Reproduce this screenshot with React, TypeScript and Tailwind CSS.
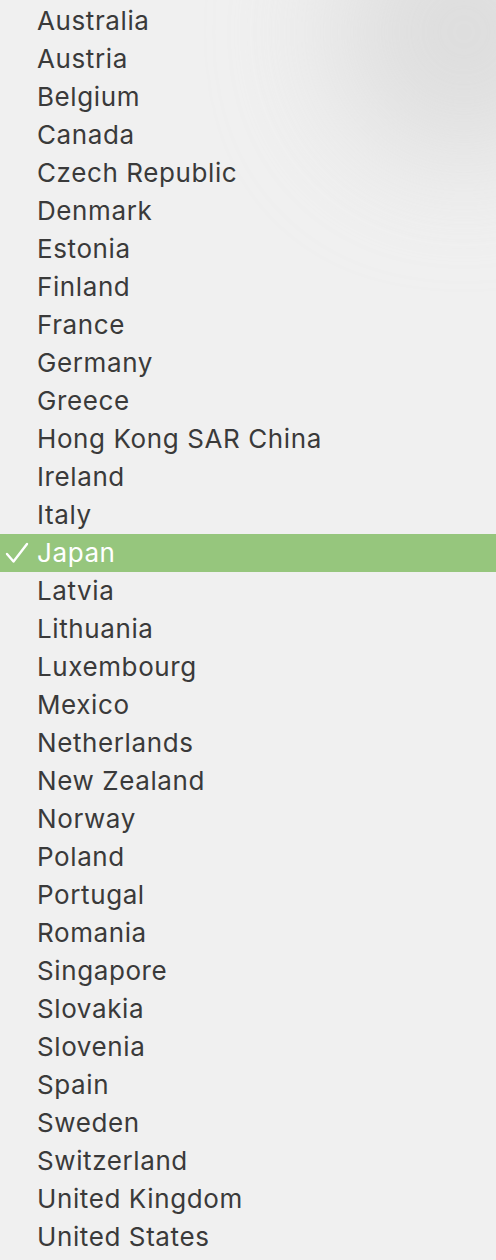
const countries = [
  'Australia',
  'Austria',
  'Belgium',
  'Canada',
  'Czech Republic',
  'Denmark',
  'Estonia',
  'Finland',
  'France',
  'Germany',
  'Greece',
  'Hong Kong SAR China',
  'Ireland',
  'Italy',
  'Japan',
  'Latvia',
  'Lithuania',
  'Luxembourg',
  'Mexico',
  'Netherlands',
  'New Zealand',
  'Norway',
  'Poland',
  'Portugal',
  'Romania',
  'Singapore',
  'Slovakia',
  'Slovenia',
  'Spain',
  'Sweden',
  'Switzerland',
  'United Kingdom',
  'United States',
];

const selected = 'Japan';

export default function App() {
  return (
    <div className="relative min-h-[1260px] w-[496px] overflow-hidden bg-[#f0f0f0] font-['Inter','Liberation_Sans',sans-serif]">
      {/* soft shadow in the top-right corner */}
      <div className="pointer-events-none absolute -right-24 -top-24 h-64 w-64 rounded-full bg-[#d4d4d4] opacity-70 blur-3xl"></div>

      <ul className="relative pt-[2px]">
        {countries.map((name) => {
          const active = name === selected;
          return (
            <li
              key={name}
              className={`flex h-[38px] items-center text-[26px] tracking-[0.6px] ${
                active ? 'bg-[#96c67d] text-white' : 'text-[#3a3a3a]'
              }`}
            >
              <span className="flex w-[37px] shrink-0 items-center justify-start pl-[5px]">
                {active && (
                  <svg width="24" height="22" viewBox="0 0 24 22" fill="none">
                    <path d="M2 12 L8.5 19.5 L22 2" stroke="white" strokeWidth="2.4" strokeLinecap="round" strokeLinejoin="round" />
                  </svg>
                )}
              </span>
              <span className="leading-none">{name}</span>
            </li>
          );
        })}
      </ul>
    </div>
  );
}
